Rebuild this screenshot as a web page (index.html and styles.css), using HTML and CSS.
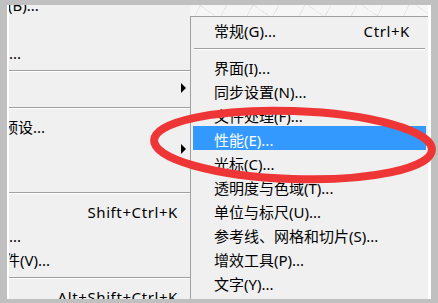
FILE: index.html
```html
<!DOCTYPE html>
<html lang="zh-CN">
<head>
<meta charset="utf-8">
<link rel="stylesheet" href="styles.css">
</head>
<body>
<div class="frame">
  <div class="left-menu">
    <div class="item"><span class="txt cut-b">(B)...</span></div>
    <div class="item"></div>
    <div class="item"><span class="txt">...</span></div>
    <div class="sep"></div>
    <div class="item"><span></span><svg class="arrow" width="5" height="10" viewBox="0 0 5 10"><path d="M0 0 L5 5 L0 10 Z"/></svg></div>
    <div class="sep"></div>
    <div class="item"><span class="txt cut-p">预设...</span></div>
    <div class="item"><span></span><svg class="arrow" width="5" height="10" viewBox="0 0 5 10"><path d="M0 0 L5 5 L0 10 Z"/></svg></div>
    <div class="item"></div>
    <div class="sep"></div>
    <div class="item"><span></span><span class="txt key">Shift+Ctrl+K</span></div>
    <div class="item"><span class="txt">...</span></div>
    <div class="item"><span class="txt cut-v">件(V)...</span></div>
    <div class="sep"></div>
    <div class="item"><span></span><span class="txt key">Alt+Shift+Ctrl+K</span></div>
  </div>
  <div class="right-col">
    <div class="texture"></div>
    <div class="menu">
      <div class="mitem"><span class="txt">常规(G)...</span><span class="txt key">Ctrl+K</span></div>
      <div class="msep"></div>
      <div class="mitem"><span class="txt">界面(I)...</span></div>
      <div class="mitem"><span class="txt">同步设置(N)...</span></div>
      <div class="mitem"><span class="txt">文件处理(F)...</span></div>
      <div class="mitem active"><span class="txt">性能(E)...</span></div>
      <div class="mitem"><span class="txt">光标(C)...</span></div>
      <div class="mitem"><span class="txt">透明度与色域(T)...</span></div>
      <div class="mitem"><span class="txt">单位与标尺(U)...</span></div>
      <div class="mitem"><span class="txt">参考线、网格和切片(S)...</span></div>
      <div class="mitem"><span class="txt">增效工具(P)...</span></div>
      <div class="mitem"><span class="txt">文字(Y)...</span></div>
    </div>
  </div>
</div>
<svg class="mark" width="438" height="303" viewBox="0 0 438 303">
  <ellipse cx="293" cy="145" rx="139" ry="34" transform="rotate(2 293 145)" fill="none" stroke="#ef3636" stroke-width="8"/>
</svg>
</body>
</html>
```

FILE: styles.css
```css
html, body {
  margin: 0;
  padding: 0;
}
body {
  width: 438px;
  height: 303px;
  overflow: hidden;
  background: #c0c0c0;
  position: relative;
  font-family: "Noto Sans", "Noto Sans CJK SC", sans-serif;
  font-size: 15px;
  color: #000;
}
.frame {
  margin: 5px 0 0 7px;
  width: 424px;
  height: 294px;
  box-sizing: border-box;
  border-left: 2px solid #fff;
  border-right: 3px solid #fff;
  background: #f0f0f0;
  overflow: hidden;
  display: flex;
}
.left-menu {
  width: 181px;
  flex: none;
  margin-top: -14px;
  overflow: hidden;
}
.item {
  height: 24px;
  display: flex;
  align-items: center;
  justify-content: space-between;
  padding-right: 12px;
  white-space: nowrap;
}
.txt {
  padding-top: 3px;
  line-height: 18px;
  white-space: nowrap;
}
.key {
  letter-spacing: 0.6px;
}
.cut-b { margin-left: -1px; }
.cut-p { margin-left: -6px; }
.cut-v { margin-left: -4px; }
.arrow {
  margin-right: -8px;
  fill: #000;
}
.sep {
  height: 1px;
  background: #a0a0a0;
  border-bottom: 1px solid #fff;
  margin: 7px 0 4px;
}
.right-col {
  flex: 1;
  display: flex;
  flex-direction: column;
  min-width: 0;
}
.texture {
  height: 11px;
  flex: none;
  background:
    repeating-linear-gradient(118deg, transparent 0 9px, rgba(200,200,200,0.35) 9px 10px, transparent 10px 23px),
    repeating-linear-gradient(35deg, transparent 0 14px, rgba(210,210,210,0.4) 14px 15px, transparent 15px 31px),
    #f6f6f6;
}
.menu {
  flex: 1;
  border-top: 1px solid #a0a0a0;
  border-left: 1px solid #a0a0a0;
  background: #f0f0f0;
  padding: 0 2px;
}
.mitem {
  height: 24px;
  display: flex;
  align-items: center;
  justify-content: space-between;
  padding: 0 16px 0 21px;
  white-space: nowrap;
}
.mitem.active {
  background: #3399ff;
  color: #fff;
}
.msep {
  height: 1px;
  background: #a0a0a0;
  border-bottom: 1px solid #fff;
  margin: 7px 1px 4px;
}
.mark {
  position: absolute;
  left: 0;
  top: 0;
  pointer-events: none;
}
```
